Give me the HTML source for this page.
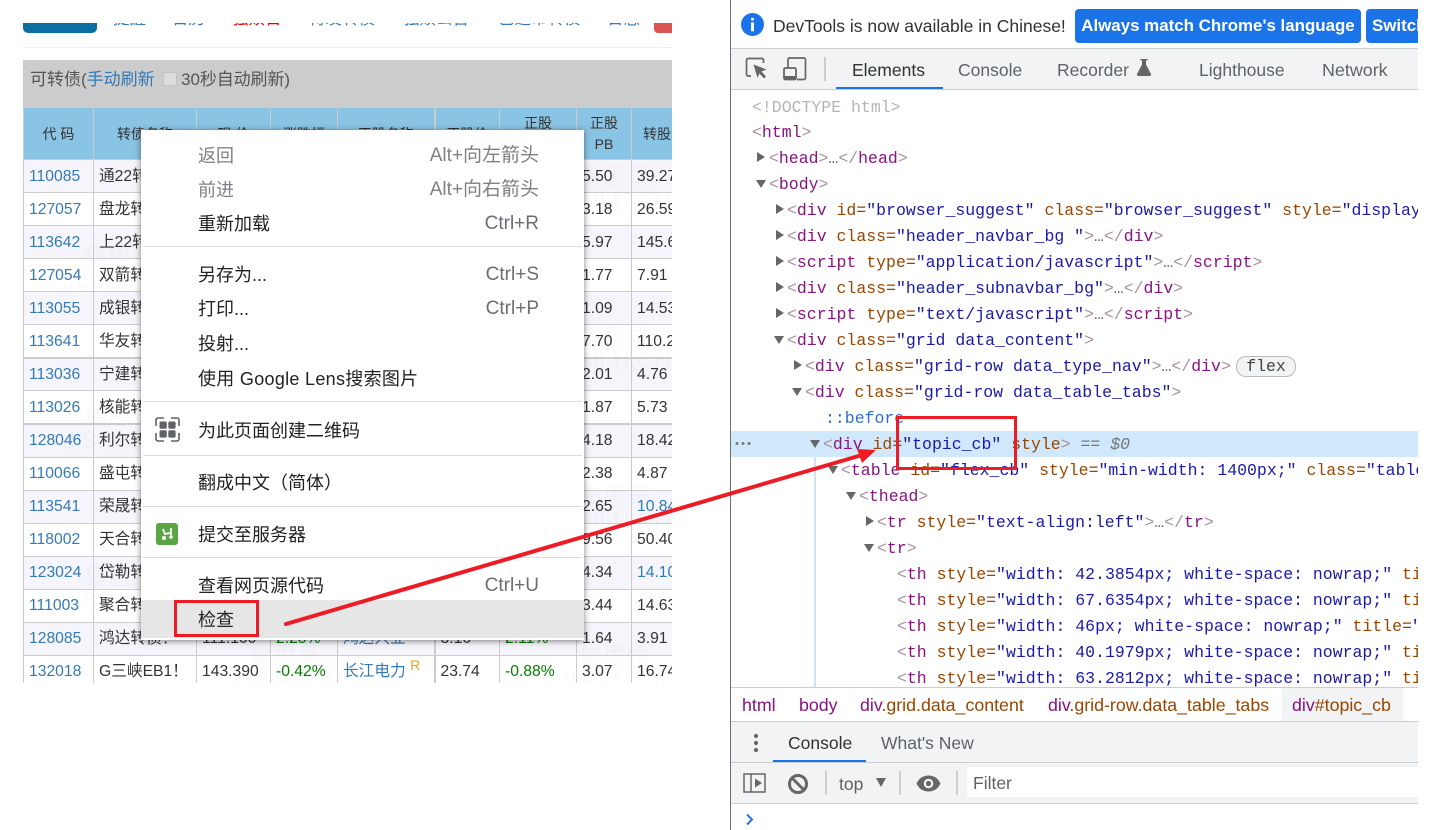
<!DOCTYPE html>
<html lang="zh"><head><meta charset="utf-8"><title>检查</title>
<style>
*{box-sizing:border-box}
html,body{margin:0;padding:0;background:#fff;width:1453px;height:830px;overflow:hidden}
body{position:relative;font-family:"Liberation Sans","Noto Sans CJK SC",sans-serif;color:#333}
.abs{position:absolute}
#nav{left:23px;top:23px;width:649px;height:24px;overflow:hidden;border-bottom:0}
#nav div{position:absolute;top:-15px;font-size:16.5px;line-height:22px;color:#337ab7;white-space:nowrap}
#wrap{left:23px;top:107px;width:649px;height:576px;overflow:hidden}
table{border-collapse:collapse;table-layout:fixed;width:670px;font-size:15.7px;color:#333}
th{background:#89c4e4;border:1px solid #ccc;font-weight:normal;font-size:14px;line-height:21px;text-align:center;height:52px;padding:2px 0 0;color:#333;white-space:nowrap;overflow:hidden}
th.two{padding:1px 0 0}
th.last{text-align:left;padding-left:11px}
td{height:33.07px;border:1px solid #ccc;padding:1px 0 0 5px;white-space:nowrap;overflow:hidden;line-height:20px}
tr.o td{background:#f5f5fb}
tr.e td{background:#fff}
tr.k td{border-bottom:2px solid #ccc}
td:first-child,th:first-child{border-left:1px solid #ccc}
td:nth-child(6),th:nth-child(6){border-left:2px solid #ccc}
.l{color:#337ab7}.g{color:#008000}
sup{color:#ffa000;font-size:14px;line-height:0}
#wm{left:23px;top:160px;width:649px;height:523px;overflow:hidden;pointer-events:none;color:rgba(60,60,80,.022)}
#wm div{position:absolute;white-space:nowrap;text-align:center;font-size:24px;line-height:24px}
#menu{left:141px;top:130px;width:443px;height:510px;background:#fff;box-shadow:0 1px 6px rgba(0,0,0,.5)}
#menu .i,#menu .s{position:absolute;font-size:18px;line-height:26px;white-space:nowrap;color:#222;margin-top:1px}
#menu .i{left:57px}
#menu .s{right:45px;color:#6a6e73;font-size:19px}
#menu .dis{color:#7d8186}
#menu hr{position:absolute;left:2px;right:2px;margin:0;border:0;height:1px;background:#dcdcdc}
#dt{left:730px;top:0;width:688px;height:830px;overflow:hidden;background:#fff;border-left:1.5px solid #6e6e6e;font-family:"Liberation Sans","Noto Sans CJK SC",sans-serif}
#dt .tab{position:absolute;font-size:17.5px;line-height:22px;color:#5f6368;white-space:nowrap}
.band{position:absolute;left:0;right:0;background:#f1f3f4}
.bd{position:absolute;left:0;right:0;height:1px;background:#cacdd1}
.sep{position:absolute;width:1.5px;background:#cacdd1}
#code{position:absolute;left:0;top:0;width:688px;font-family:"Liberation Mono","DejaVu Sans Mono",monospace;font-size:16.5px;line-height:26px}
#code div{position:absolute;white-space:pre;height:26px;margin-top:1px}
.t{color:#881280}.a{color:#994500}.v{color:#1a1aa6}.b{color:#a8929f}.c{color:#666}
.tri{display:inline-block;width:0;height:0;position:absolute}
.r{border-left:8px solid #666;border-top:5.5px solid transparent;border-bottom:5.5px solid transparent;top:7px}
.d{border-top:8px solid #666;border-left:5.5px solid transparent;border-right:5.5px solid transparent;top:9px}
.bc{position:absolute;top:694px;font-size:17.8px;line-height:22px;white-space:nowrap;color:#994500}
</style></head><body>

<div class="abs" style="left:23px;top:23px;width:74px;height:10px;background:#0b6fa2;border-radius:0 0 5px 5px"></div>
<div class="abs" id="nav">
<div style="left:90px">提醒</div><div style="left:149px">日历</div><div style="left:209px;color:#e00000">强赎日</div>
<div style="left:286px">待发转债</div><div style="left:380px">强赎公告</div><div style="left:475px">已退市转债</div><div style="left:584px">日志</div>
</div>
<div class="abs" style="left:654px;top:23px;width:18px;height:10px;background:#d9534f;border-radius:0 0 0 4px"></div>
<div class="abs" style="left:23px;top:47px;width:649px;height:1px;background:#eee"></div>

<div class="abs" style="left:23px;top:60px;width:649px;height:48px;background:#ccc;font-size:17px;line-height:39px;color:#555;padding-left:7px;white-space:nowrap">可转债(<span style="color:#337ab7">手动刷新</span> <span style="display:inline-block;width:14px;height:14px;background:#ddd;border:1px solid #c4c4c4;border-radius:2px;vertical-align:-1px;margin:0 -1px 0 4px"></span> <span style="letter-spacing:-.1px">30秒自动刷新)</span></div>

<div class="abs" id="wrap">
<table>
<colgroup><col style="width:70px"><col style="width:103px"><col style="width:74px"><col style="width:67px"><col style="width:97px"><col style="width:65px"><col style="width:77px"><col style="width:55px"><col style="width:62px"></colgroup>
<tr><th>代 码</th><th>转债名称</th><th>现 价</th><th>涨跌幅</th><th>正股名称</th><th>正股价</th><th class="two">正股<br>涨跌</th><th class="two">正股<br>PB</th><th class="last">转股价值</th></tr>
<tr class="o"><td class="l">110085</td><td>通22转债</td><td></td><td></td><td></td><td></td><td></td><td>5.50</td><td>39.27</td></tr>
<tr class="e"><td class="l">127057</td><td>盘龙转债</td><td></td><td></td><td></td><td></td><td></td><td>3.18</td><td>26.59</td></tr>
<tr class="o"><td class="l">113642</td><td>上22转债</td><td></td><td></td><td></td><td></td><td></td><td>5.97</td><td>145.67</td></tr>
<tr class="e"><td class="l">127054</td><td>双箭转债</td><td></td><td></td><td></td><td></td><td></td><td>1.77</td><td>7.91</td></tr>
<tr class="o"><td class="l">113055</td><td>成银转债</td><td></td><td></td><td></td><td></td><td></td><td>1.09</td><td>14.53</td></tr>
<tr class="e k"><td class="l">113641</td><td>华友转债</td><td></td><td></td><td></td><td></td><td></td><td>7.70</td><td>110.2</td></tr>
<tr class="o"><td class="l">113036</td><td>宁建转债</td><td></td><td></td><td></td><td></td><td></td><td>2.01</td><td>4.76</td></tr>
<tr class="e k"><td class="l">113026</td><td>核能转债</td><td></td><td></td><td></td><td></td><td></td><td>1.87</td><td>5.73</td></tr>
<tr class="o"><td class="l">128046</td><td>利尔转债</td><td></td><td></td><td></td><td></td><td></td><td>4.18</td><td>18.42</td></tr>
<tr class="e"><td class="l">110066</td><td>盛屯转债</td><td></td><td></td><td></td><td></td><td></td><td>2.38</td><td>4.87</td></tr>
<tr class="o"><td class="l">113541</td><td>荣晟转债</td><td></td><td></td><td></td><td></td><td></td><td>2.65</td><td class="l">10.84</td></tr>
<tr class="e"><td class="l">118002</td><td>天合转债</td><td></td><td></td><td></td><td></td><td></td><td>9.56</td><td>50.40</td></tr>
<tr class="o"><td class="l">123024</td><td>岱勒转债</td><td></td><td></td><td></td><td></td><td></td><td>4.34</td><td class="l">14.10</td></tr>
<tr class="e"><td class="l">111003</td><td>聚合转债</td><td></td><td></td><td></td><td></td><td></td><td>3.44</td><td>14.63</td></tr>
<tr class="o"><td class="l">128085</td><td>鸿达转债！</td><td>111.100</td><td class="g">2.28%</td><td class="l">鸿达兴业</td><td>3.16</td><td class="g">2.11%</td><td>1.64</td><td>3.91</td></tr>
<tr class="e"><td class="l">132018</td><td>G三峡EB1！</td><td>143.390</td><td class="g">-0.42%</td><td class="l">长江电力 <sup>R</sup></td><td>23.74</td><td class="g">-0.88%</td><td>3.07</td><td>16.74</td></tr>
</table>
</div>

<div class="abs" id="wm">
<div style="left:535px;top:6px">集思录<br>JISILU.CN</div>
<div style="left:535px;top:166px">集思录<br>JISILU.CN</div>
<div style="left:535px;top:326px">集思录<br>JISILU.CN</div>
<div style="left:535px;top:486px">集思录<br>JISILU.CN</div>
<div style="left:40px;top:86px">集思录<br>JISILU.CN</div>
<div style="left:40px;top:246px">集思录<br>JISILU.CN</div>
<div style="left:40px;top:406px">集思录<br>JISILU.CN</div>
<div style="left:205px;top:486px">集思录<br>JISILU.CN</div>
</div>

<div class="abs" id="menu">
<div class="i dis" style="top:12px">返回</div><div class="s dis" style="top:12px">Alt+向左箭头</div>
<div class="i dis" style="top:46px">前进</div><div class="s dis" style="top:46px">Alt+向右箭头</div>
<div class="i" style="top:80px">重新加载</div><div class="s" style="top:80px">Ctrl+R</div>
<hr style="top:116px">
<div class="i" style="top:131px">另存为...</div><div class="s" style="top:131px">Ctrl+S</div>
<div class="i" style="top:165px">打印...</div><div class="s" style="top:165px">Ctrl+P</div>
<div class="i" style="top:200px">投射...</div>
<div class="i" style="top:235px;letter-spacing:.3px">使用 Google Lens搜索图片</div>
<hr style="top:271px">
<svg style="position:absolute;left:14px;top:287px" width="25" height="25" viewBox="0 0 25 25"><path d="M1 9V3a2 2 0 0 1 2-2h6M16 1h6a2 2 0 0 1 2 2v6M24 16v6a2 2 0 0 1-2 2h-6M9 24H3a2 2 0 0 1-2-2v-6" fill="none" stroke="#5f6368" stroke-width="1.6"/><rect x="4.500" y="4.500" width="7.300" height="7.300" rx="1.500" fill="#5f6368"/><rect x="13.300" y="4.500" width="7.300" height="7.300" rx="1.500" fill="#5f6368"/><rect x="4.500" y="13.300" width="7.300" height="7.300" rx="1.500" fill="#5f6368"/><rect x="13.300" y="13.300" width="7.300" height="7.300" rx="1.500" fill="#5f6368"/></svg>
<div class="i" style="top:287px">为此页面创建二维码</div>
<hr style="top:325px">
<div class="i" style="top:339px">翻成中文（简体）</div>
<hr style="top:376px">
<svg style="position:absolute;left:15px;top:393px" width="22" height="22" viewBox="0 0 22 22"><rect width="22" height="22" rx="3" fill="#5aa545"/><path d="M7 6l2 5 5-1M15 5v7" fill="none" stroke="#fff" stroke-width="1.8"/><circle cx="8" cy="15" r="2" fill="#fff"/><circle cx="15" cy="14" r="1.8" fill="#fff"/></svg>
<div class="i" style="top:391px">提交至服务器</div>
<hr style="top:427px">
<div class="i" style="top:442px">查看网页源代码</div><div class="s" style="top:442px">Ctrl+U</div>
<div style="position:absolute;left:0;right:0;top:470px;height:38px;background:#e6e6e6"></div>
<div class="i" style="top:476px">检查</div>
</div>

<div class="abs" id="dt">
<svg style="position:absolute;left:10px;top:13px" width="23" height="23" viewBox="0 0 22 22"><circle cx="11" cy="11" r="11" fill="#1a73e8"/><rect x="9.600" y="4.500" width="2.800" height="2.800" rx="1.400" fill="#fff"/><rect x="9.600" y="9" width="2.800" height="8.500" fill="#fff"/></svg>
<div class="tab" style="left:42px;top:15px;color:#303336">DevTools is now available in Chinese!</div>
<div style="position:absolute;left:344px;top:9px;width:286px;height:34px;background:#1a73e8;border-radius:4px;color:#fff;font-weight:bold;font-size:16.9px;line-height:34px;text-align:center;white-space:nowrap">Always match Chrome's language</div>
<div style="position:absolute;left:635px;top:9px;width:70px;height:34px;background:#1a73e8;border-radius:4px;color:#fff;font-weight:bold;font-size:16.9px;line-height:34px;padding-left:6px;white-space:nowrap">Switch</div>

<div class="bd" style="top:48px"></div>
<div class="band" style="top:49px;height:40px"></div>
<svg style="position:absolute;left:13px;top:56px" width="64" height="26" viewBox="0 0 64 26"><path d="M7 20H4a1.500 1.500 0 0 1-1.500-1.500V4A1.500 1.500 0 0 1 4 2.500h14A1.500 1.500 0 0 1 19.500 4v3" fill="none" stroke="#666" stroke-width="1.700"/><path d="M9.500 8.500l13 5-5 2 4.500 5-2 2-4.500-5-2 4.500z" fill="#666"/><path d="M44 12V3.500A1.500 1.500 0 0 1 45.500 2H60a1.500 1.500 0 0 1 1.500 1.500v18.500a1.500 1.500 0 0 1-1.500 1.500H53" fill="none" stroke="#666" stroke-width="1.700"/><rect x="40" y="12" width="12" height="11.500" rx="1.500" fill="none" stroke="#666" stroke-width="1.800"/><rect x="40" y="20" width="12" height="3.500" fill="#666"/></svg>
<div class="sep" style="left:93px;top:57px;height:24px"></div>
<div class="tab" style="left:121px;top:59px;color:#303336">Elements</div>
<div class="tab" style="left:227px;top:59px">Console</div>
<div class="tab" style="left:326px;top:59px">Recorder</div>
<svg style="position:absolute;left:405px;top:59px" width="16" height="17" viewBox="0 0 16 17"><path d="M4.500 0h7v1.500H10v4L15 15a1.500 1.500 0 0 1-1.500 2h-11A1.500 1.500 0 0 1 1 15l5-9.500v-4H4.500z" fill="#666"/></svg>
<div class="tab" style="left:468px;top:59px">Lighthouse</div>
<div class="tab" style="left:591px;top:59px;font-size:17.9px">Network</div>
<div style="position:absolute;left:105px;top:87px;width:107px;height:2px;background:#1a73e8"></div>
<div class="bd" style="top:89px"></div>

<div style="position:absolute;left:0;right:0;top:431px;height:26px;background:#cfe8fc"></div>
<div style="position:absolute;left:83px;top:457px;width:1.500px;height:230px;background:#d2e3f8"></div>
<svg style="position:absolute;left:4px;top:441px" width="16" height="5" viewBox="0 0 16 5"><circle cx="2" cy="2.500" r="1.500" fill="#777"/><circle cx="8" cy="2.500" r="1.500" fill="#777"/><circle cx="14" cy="2.500" r="1.500" fill="#777"/></svg>

<div id="code">
<div style="left:21px;top:94px;color:#b5b5b5">&lt;!DOCTYPE html&gt;</div>
<div style="left:21px;top:119px"><span class="b">&lt;</span><span class="t">html</span><span class="b">&gt;</span></div>
<i class="tri r" style="left:26px;top:152px"></i><div style="left:38px;top:145px"><span class="b">&lt;</span><span class="t">head</span><span class="b">&gt;</span><span class="c">…</span><span class="b">&lt;/</span><span class="t">head</span><span class="b">&gt;</span></div>
<i class="tri d" style="left:25px;top:180px"></i><div style="left:38px;top:171px"><span class="b">&lt;</span><span class="t">body</span><span class="b">&gt;</span></div>
<i class="tri r" style="left:45px;top:204px"></i><div style="left:56px;top:197px"><span class="b">&lt;</span><span class="t">div</span> <span class="a">id=</span><span class="v">"browser_suggest"</span> <span class="a">class=</span><span class="v">"browser_suggest"</span> <span class="a">style=</span><span class="v">"display</span></div>
<i class="tri r" style="left:45px;top:230px"></i><div style="left:56px;top:223px"><span class="b">&lt;</span><span class="t">div</span> <span class="a">class=</span><span class="v">"header_navbar_bg "</span><span class="b">&gt;</span><span class="c">…</span><span class="b">&lt;/</span><span class="t">div</span><span class="b">&gt;</span></div>
<i class="tri r" style="left:45px;top:256px"></i><div style="left:56px;top:249px"><span class="b">&lt;</span><span class="t">script</span> <span class="a">type=</span><span class="v">"application/javascript"</span><span class="b">&gt;</span><span class="c">…</span><span class="b">&lt;/</span><span class="t">script</span><span class="b">&gt;</span></div>
<i class="tri r" style="left:45px;top:282px"></i><div style="left:56px;top:275px"><span class="b">&lt;</span><span class="t">div</span> <span class="a">class=</span><span class="v">"header_subnavbar_bg"</span><span class="b">&gt;</span><span class="c">…</span><span class="b">&lt;/</span><span class="t">div</span><span class="b">&gt;</span></div>
<i class="tri r" style="left:45px;top:308px"></i><div style="left:56px;top:301px"><span class="b">&lt;</span><span class="t">script</span> <span class="a">type=</span><span class="v">"text/javascript"</span><span class="b">&gt;</span><span class="c">…</span><span class="b">&lt;/</span><span class="t">script</span><span class="b">&gt;</span></div>
<i class="tri d" style="left:43px;top:336px"></i><div style="left:56px;top:327px"><span class="b">&lt;</span><span class="t">div</span> <span class="a">class=</span><span class="v">"grid data_content"</span><span class="b">&gt;</span></div>
<i class="tri r" style="left:63px;top:360px"></i><div style="left:74px;top:353px"><span class="b">&lt;</span><span class="t">div</span> <span class="a">class=</span><span class="v">"grid-row data_type_nav"</span><span class="b">&gt;</span><span class="c">…</span><span class="b">&lt;/</span><span class="t">div</span><span class="b">&gt;</span></div>
<i class="tri d" style="left:61px;top:388px"></i><div style="left:74px;top:379px"><span class="b">&lt;</span><span class="t">div</span> <span class="a">class=</span><span class="v">"grid-row data_table_tabs"</span><span class="b">&gt;</span></div>
<div style="left:94px;top:405px;color:#2a6fd0">::before</div>
<i class="tri d" style="left:79px;top:440px"></i><div style="left:92px;top:431px"><span class="b">&lt;</span><span class="t">div</span> <span class="a">id=</span><span class="v">"topic_cb"</span> <span class="a">style</span><span class="b">&gt;</span> <span style="color:#777">== <i>$0</i></span></div>
<i class="tri d" style="left:97px;top:466px"></i><div style="left:110px;top:457px"><span class="b">&lt;</span><span class="t">table</span> <span class="a">id=</span><span class="v">"flex_cb"</span> <span class="a">style=</span><span class="v">"min-width: 1400px;"</span> <span class="a">class=</span><span class="v">"table</span></div>
<i class="tri d" style="left:115px;top:492px"></i><div style="left:128px;top:483px"><span class="b">&lt;</span><span class="t">thead</span><span class="b">&gt;</span></div>
<i class="tri r" style="left:135px;top:516px"></i><div style="left:146px;top:509px"><span class="b">&lt;</span><span class="t">tr</span> <span class="a">style=</span><span class="v">"text-align:left"</span><span class="b">&gt;</span><span class="c">…</span><span class="b">&lt;/</span><span class="t">tr</span><span class="b">&gt;</span></div>
<i class="tri d" style="left:133px;top:544px"></i><div style="left:146px;top:535px"><span class="b">&lt;</span><span class="t">tr</span><span class="b">&gt;</span></div>
<div style="left:166px;top:561px"><span class="b">&lt;</span><span class="t">th</span> <span class="a">style=</span><span class="v">"width: 42.3854px; white-space: nowrap;"</span> <span class="a">title</span></div>
<div style="left:166px;top:587px"><span class="b">&lt;</span><span class="t">th</span> <span class="a">style=</span><span class="v">"width: 67.6354px; white-space: nowrap;"</span> <span class="a">title</span></div>
<div style="left:166px;top:613px"><span class="b">&lt;</span><span class="t">th</span> <span class="a">style=</span><span class="v">"width: 46px; white-space: nowrap;"</span> <span class="a">title=</span><span class="v">"</span></div>
<div style="left:166px;top:639px"><span class="b">&lt;</span><span class="t">th</span> <span class="a">style=</span><span class="v">"width: 40.1979px; white-space: nowrap;"</span> <span class="a">title</span></div>
<div style="left:166px;top:665px"><span class="b">&lt;</span><span class="t">th</span> <span class="a">style=</span><span class="v">"width: 63.2812px; white-space: nowrap;"</span> <span class="a">title</span></div>
</div>
<div style="position:absolute;left:505px;top:356px;width:60px;height:21px;border:1px solid #bbb;border-radius:10px;background:#f1f3f4;font-family:'Liberation Mono',monospace;font-size:16.5px;line-height:19px;text-align:center;color:#444">flex</div>

<div style="position:absolute;left:0;right:0;top:687px;height:35px;background:#fff;border-top:1px solid #cacdd1;border-bottom:1px solid #cacdd1"></div>
<div style="position:absolute;left:551px;top:688px;width:121px;height:33px;background:#f1f3f4"></div>
<div class="bc" style="left:11px;color:#881280">html</div>
<div class="bc" style="left:68px;color:#881280">body</div>
<div class="bc" style="left:129px"><span style="color:#881280">div</span>.grid.data_content</div>
<div class="bc" style="left:317px"><span style="color:#881280">div</span>.grid-row.data_table_tabs</div>
<div class="bc" style="left:561px"><span style="color:#881280">div</span>#topic_cb</div>

<div class="band" style="top:722px;height:40px"></div>
<svg style="position:absolute;left:22px;top:733px" width="6" height="20" viewBox="0 0 6 20"><circle cx="3" cy="3" r="2.100" fill="#666"/><circle cx="3" cy="10" r="2.100" fill="#666"/><circle cx="3" cy="17" r="2.100" fill="#666"/></svg>
<div class="tab" style="left:57px;top:732px;color:#303336">Console</div>
<div class="tab" style="left:150px;top:732px">What's New</div>
<div style="position:absolute;left:42px;top:760px;width:93px;height:2px;background:#1a73e8"></div>
<div class="bd" style="top:762px"></div>
<div class="band" style="top:763px;height:40px"></div>
<svg style="position:absolute;left:12px;top:773px" width="24" height="21" viewBox="0 0 24 21"><rect x="1" y="1" width="21" height="18" fill="none" stroke="#666" stroke-width="1.500"/><path d="M8 1v18" stroke="#666" stroke-width="1.500"/><path d="M12 5.500l7 4.500-7 4.500z" fill="#666"/></svg>
<svg style="position:absolute;left:56px;top:773px" width="22" height="22" viewBox="0 0 22 22"><circle cx="11" cy="11" r="8.500" fill="none" stroke="#666" stroke-width="3"/><path d="M5 5l12 12" stroke="#666" stroke-width="3"/></svg>
<div class="sep" style="left:94px;top:771px;height:24px"></div>
<div class="tab" style="left:108px;top:773px">top</div>
<i class="tri" style="left:145px;top:778px;border-top:9px solid #666;border-left:5.500px solid transparent;border-right:5.500px solid transparent"></i>
<div class="sep" style="left:168px;top:771px;height:24px"></div>
<svg style="position:absolute;left:185px;top:775px" width="25" height="17" viewBox="0 0 25 17"><path d="M0.500 8.500C3 3 7.500 0.500 12.500 0.500S22 3 24.500 8.500C22 14 17.500 16.500 12.500 16.500S3 14 0.500 8.500z" fill="#666"/><circle cx="12.500" cy="8.500" r="4.800" fill="#f1f3f4"/><circle cx="12.500" cy="8.500" r="2.600" fill="#666"/></svg>
<div class="sep" style="left:225px;top:771px;height:24px"></div>
<div style="position:absolute;left:236px;top:767px;width:460px;height:30px;background:#fff;border-radius:2px;font-size:17.5px;line-height:33px;padding-left:6px;color:#5f6368">Filter</div>
<div class="bd" style="top:803px"></div>
<svg style="position:absolute;left:14px;top:813px" width="10" height="13" viewBox="0 0 10 13"><path d="M2 1.500l5 5-5 5" fill="none" stroke="#2f73e0" stroke-width="2"/></svg>
</div>

<svg class="abs" style="left:0;top:0;pointer-events:none" width="1453" height="830" viewBox="0 0 1453 830">
<rect x="175.500" y="601.500" width="82" height="34" fill="none" stroke="#ed1c24" stroke-width="3"/>
<rect x="897.500" y="417.500" width="118" height="51" fill="none" stroke="#ed1c24" stroke-width="3"/>
<path d="M286 624L862 455" stroke="#ed1c24" stroke-width="4" stroke-linecap="round"/>
<path d="M876 450L857 449L862 463z" fill="#ed1c24"/>
</svg>
</body></html>
